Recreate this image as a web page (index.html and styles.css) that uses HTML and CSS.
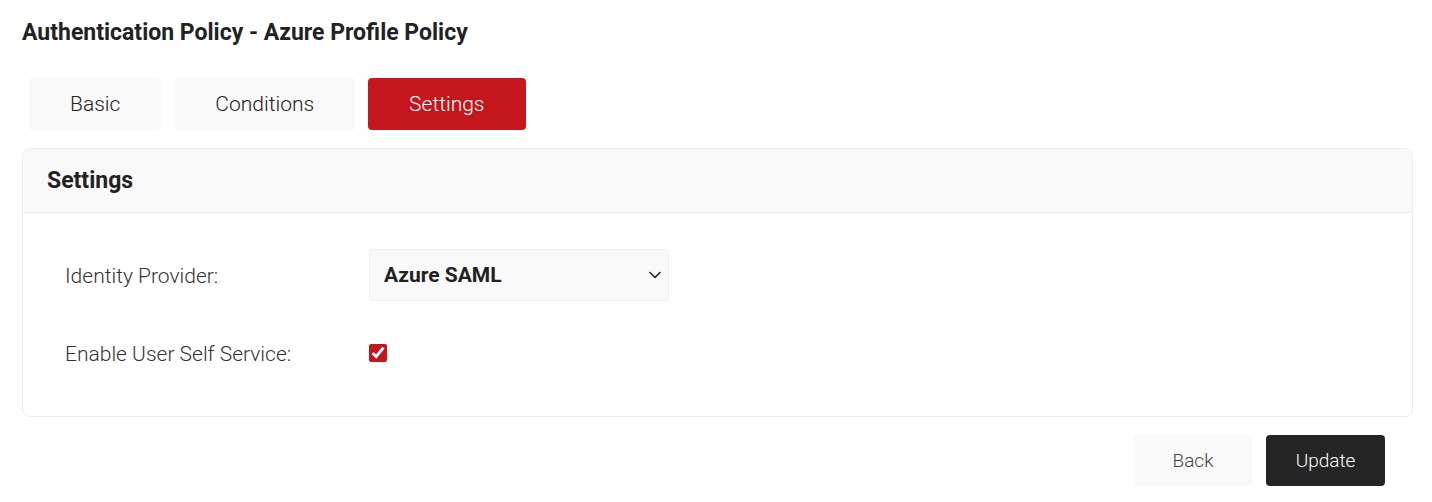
FILE: index.html
```html
<!DOCTYPE html>
<html lang="en">
  <head>
    <meta charset="UTF-8" />
    <meta name="viewport" content="width=device-width, initial-scale=1.0" />
    <title>Authentication Policy</title>
    <link rel="stylesheet" href="styles.css">
  </head>
  <body>
    <h1 class="page-title">Authentication Policy - Azure Profile Policy</h1>
    <div class="tabs">
      <button class="tab">Basic</button>
      <button class="tab">Conditions</button>
      <button class="tab active">Settings</button>
    </div>
    <div class="card">
      <div class="card-header">Settings</div>
      <div class="card-body">
        <div class="form-row">
          <label class="form-label" for="idp">Identity Provider:</label>
          <div class="select-wrap">
            <select id="idp" class="select">
              <option>Azure SAML</option>
            </select>
            <svg class="chevron" width="12" height="8" viewBox="0 0 12 8">
              <path d="M1 1.5l5 5 5-5" fill="none" stroke="#222" stroke-width="1.6" stroke-linecap="round" stroke-linejoin="round"/>
            </svg>
          </div>
        </div>
        <div class="form-row">
          <label class="form-label" for="selfservice">Enable User Self Service:</label>
          <input id="selfservice" class="checkbox" type="checkbox" checked />
        </div>
      </div>
    </div>
    <div class="actions">
      <button class="btn btn-back">Back</button>
      <button class="btn btn-update">Update</button>
    </div>
  </body>
</html>
```

FILE: styles.css
```css
body {
  margin: 0;
  padding: 19px 19px 0 22px;
  font-family: Roboto, "Liberation Sans", sans-serif;
  color: #222;
  background: #fff;
}
.page-title {
  margin: 0;
  font-size: 23px;
  line-height: 27px;
  font-weight: 700;
  color: #222;
}
.tabs {
  display: flex;
  gap: 13px;
  margin-top: 32px;
  padding-left: 7px;
}
.tab {
  height: 52px;
  padding: 0 41px;
  border: none;
  border-radius: 4px;
  background-color: #f9f9f9;
  font-family: Roboto, "Liberation Sans", sans-serif;
  font-size: 21px;
  font-weight: 300;
  color: #222;
  cursor: pointer;
  box-shadow: 0 0 3px rgba(0, 0, 0, 0.03);
}
.tab.active {
  background-color: #c4161c;
  color: #fff;
}
.card {
  margin-top: 18px;
  border: 1px solid #ececec;
  border-radius: 8px;
  overflow: hidden;
}
.card-header {
  height: 63px;
  display: flex;
  align-items: center;
  padding-left: 24px;
  background-color: #f9f9f9;
  border-bottom: 1px solid #ececec;
  font-size: 23px;
  font-weight: 700;
}
.card-body {
  padding: 36px 42px 37px;
  display: flex;
  flex-direction: column;
  gap: 26px;
}
.form-row {
  display: flex;
  align-items: center;
  height: 52px;
}
.form-label {
  width: 304px;
  padding-top: 1px;
  font-size: 21px;
  font-weight: 300;
  color: #333;
}
.select-wrap {
  position: relative;
  width: 300px;
  height: 52px;
}
.select {
  appearance: none;
  width: 100%;
  height: 100%;
  padding: 0 40px 0 14px;
  border: 1px solid #eeeeee;
  border-radius: 4px;
  background-color: #f9f9f9;
  font-family: Roboto, "Liberation Sans", sans-serif;
  font-size: 21px;
  font-weight: 700;
  color: #222;
}
.chevron {
  position: absolute;
  right: 8px;
  top: 22px;
  pointer-events: none;
}
.checkbox {
  width: 18px;
  height: 18px;
  margin: 0;
  accent-color: #c4161c;
}
.actions {
  display: flex;
  justify-content: flex-end;
  gap: 14px;
  margin-top: 18px;
  padding-right: 28px;
}
.btn {
  height: 51px;
  width: 118px;
  border: none;
  border-radius: 4px;
  font-family: Roboto, "Liberation Sans", sans-serif;
  font-size: 19px;
  font-weight: 300;
  cursor: pointer;
}
.btn-back {
  background-color: #f9f9f9;
  color: #444;
}
.btn-update {
  width: 119px;
  background-color: #252525;
  color: #fff;
}
```
